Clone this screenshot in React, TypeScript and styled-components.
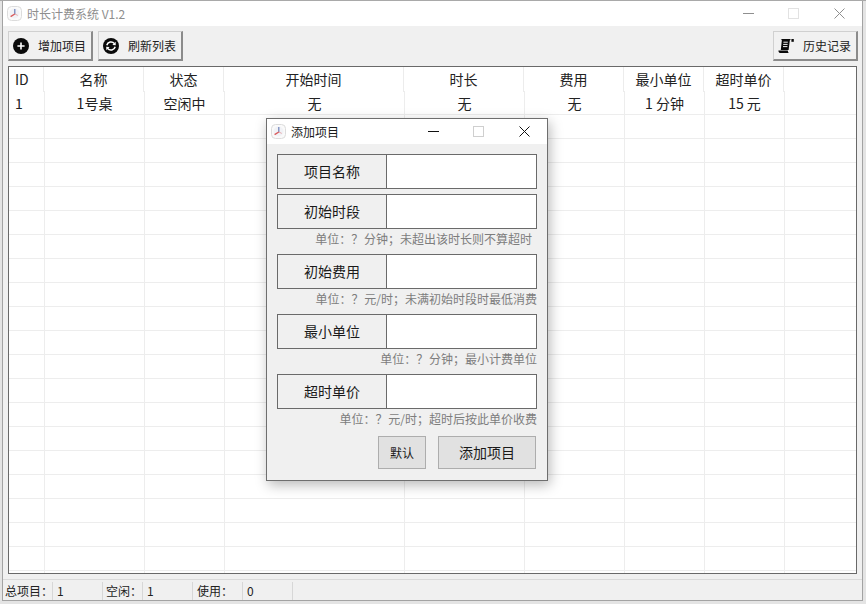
import React, {FC} from 'react';
import styled, {createGlobalStyle} from 'styled-components';

const GlobalStyle = createGlobalStyle`
  html, body {
    margin: 0;
    padding: 0;
    background: #fff;
    overflow: hidden;
  }

  body {
    font-family: "Noto Sans CJK SC", "Liberation Sans", sans-serif;
    color: #1a1a1a;
  }
`;

const Page = styled.div`
  width: 866px;
  height: 604px;
  background: #e4e4e4;
  border-top: 1px solid #a9a9a9;
  box-sizing: border-box;
  padding-left: 2px;
`;

const MainWindow = styled.div`
  position: relative;
  width: 861px;
  height: 600px;
  box-sizing: border-box;
  display: flex;
  flex-direction: column;
  background: #f0f0f0;
  border-left: 1px solid #a3a3a3;
  border-right: 1px solid #a3a3a3;
  border-bottom: 1px solid #a3a3a3;
`;

const TitleBar = styled.div<{$height: number}>`
  height: ${props => props.$height}px;
  flex: none;
  display: flex;
  align-items: center;
  background: #fff;
`;

const TitleIcon = styled.svg<{$left: number}>`
  width: 15px;
  height: 15px;
  flex: none;
  margin-left: ${props => props.$left}px;
`;

const TitleText = styled.span<{$inactive?: boolean; $gap: number}>`
  flex: 1;
  margin-left: ${props => props.$gap}px;
  font-size: 12px;
  line-height: 16px;
  color: ${props => (props.$inactive ? '#8e8e8e' : '#1a1a1a')};
`;

const Controls = styled.div`
  display: flex;
  align-self: stretch;
`;

const ControlButton = styled.div`
  width: 45.5px;
  display: flex;
  align-items: center;
  justify-content: center;
`;

const ControlIcon = styled.svg`
  width: 11px;
  height: 11px;
  fill: none;
  stroke-width: 1;
`;

const Toolbar = styled.div`
  height: 40px;
  flex: none;
  display: flex;
  align-items: center;
  box-sizing: border-box;
  padding: 0 4px 0 5px;
  gap: 5px;
`;

const ToolButton = styled.div<{$push?: boolean}>`
  width: 85px;
  height: 30px;
  box-sizing: border-box;
  display: flex;
  align-items: center;
  gap: 9px;
  padding-left: 4px;
  margin-left: ${props => (props.$push ? 'auto' : '0')};
  background: #f1f1f1;
  border-top: 1px solid #d0d0d0;
  border-left: 1px solid #d0d0d0;
  border-right: 2px solid #8b8b8b;
  border-bottom: 2px solid #8b8b8b;
  font-size: 12px;
  color: #222;
`;

const ToolIcon = styled.svg`
  width: 16px;
  height: 16px;
  flex: none;
`;

const Table = styled.div`
  flex: none;
  height: 508px;
  margin: 0 5px;
  box-sizing: border-box;
  background: #fff;
  border: 1px solid #696969;
  overflow: hidden;
`;

const HeaderRow = styled.div`
  display: grid;
  grid-template-columns: 35px 100px 80px 180px 120px 100px 80px 80px 1fr;
  height: 24px;
`;

const HeaderCell = styled.div<{$first?: boolean; $last?: boolean}>`
  box-sizing: border-box;
  padding-left: ${props => (props.$first ? '6px' : '0')};
  border-right: ${props => (props.$last ? 'none' : '1px solid #ececec')};
  text-align: ${props => (props.$first ? 'left' : 'center')};
  font-size: 14px;
  line-height: 25px;
  color: #222;
`;

const BodyRow = styled.div`
  display: grid;
  grid-template-columns: 36px 100px 80px 180px 120px 100px 80px 80px 1fr;
  height: 24px;
  box-sizing: border-box;
  border-bottom: 1px solid #ededed;
`;

const BodyCell = styled.div<{$first?: boolean; $last?: boolean}>`
  box-sizing: border-box;
  padding-left: ${props => (props.$first ? '6px' : '0')};
  border-right: ${props => (props.$last ? 'none' : '1px solid #ededed')};
  text-align: ${props => (props.$first ? 'left' : 'center')};
  font-size: 14px;
  line-height: 25px;
  color: #222;
`;

const StatusBar = styled.div`
  height: 21px;
  margin-top: 5px;
  flex: none;
  display: flex;
  border-top: 1px solid #dadada;
`;

const StatusCell = styled.div<{$width: number; $pad: number}>`
  width: ${props => props.$width}px;
  box-sizing: border-box;
  margin: 2px 0 1px;
  padding-left: ${props => props.$pad}px;
  border-right: 1px solid #d7d7d7;
  font-size: 12px;
  line-height: 18px;
  color: #222;
  white-space: nowrap;
`;

const Dialog = styled.div`
  position: absolute;
  left: 263px;
  top: 117px;
  width: 282px;
  height: 363px;
  box-sizing: border-box;
  background: #f0f0f0;
  border: 1px solid #6e6e6e;
  box-shadow: 2px 4px 12px rgba(0, 0, 0, 0.28);
`;

const Form = styled.div`
  display: flex;
  flex-direction: column;
  padding: 10px 10px 0;
`;

const Field = styled.div<{$spaced?: boolean}>`
  height: 35px;
  flex: none;
  box-sizing: border-box;
  display: flex;
  margin-bottom: ${props => (props.$spaced ? '5px' : '0')};
  border: 1px solid #6a6a6a;
`;

const FieldLabel = styled.label`
  width: 109px;
  flex: none;
  box-sizing: border-box;
  border-right: 1px solid #6a6a6a;
  text-align: center;
  font-size: 14px;
  line-height: 32px;
  color: #1a1a1a;
`;

const FieldInput = styled.input`
  flex: 1;
  min-width: 0;
  padding: 0 4px;
  border: none;
  outline: none;
  background: #fff;
`;

const Hint = styled.div<{$inset?: boolean}>`
  height: 25px;
  flex: none;
  padding-right: ${props => (props.$inset ? '5px' : '0')};
  text-align: right;
  font-size: 12px;
  line-height: 20px;
  word-spacing: -2px;
  color: #7d7d7d;
  white-space: pre;
`;

const Actions = styled.div`
  display: flex;
  justify-content: flex-end;
  gap: 12px;
  margin-top: 2px;
  padding-right: 1px;
`;

const ActionButton = styled.div<{$width: number; $size: number}>`
  width: ${props => props.$width}px;
  height: 33px;
  box-sizing: border-box;
  background: #e1e1e1;
  border: 1px solid #adadad;
  text-align: center;
  font-size: ${props => props.$size}px;
  line-height: 31px;
  color: #1a1a1a;
`;

const columns = ['ID', '名称', '状态', '开始时间', '时长', '费用', '最小单位', '超时单价', ''];
const firstRow = ['1', '1号桌', '空闲中', '无', '无', '无', '1 分钟', '15 元', ''];
const emptyRow = ['', '', '', '', '', '', '', '', ''];
const rows = [firstRow, ...Array.from({length: 20}, () => emptyRow)];

const statusCells = [
  {text: '总项目：', width: 50, pad: 2},
  {text: '1', width: 50, pad: 4},
  {text: '空闲：', width: 40, pad: 3},
  {text: '1', width: 50, pad: 4},
  {text: '使用：', width: 50, pad: 4},
  {text: '0', width: 50, pad: 4},
];

const AppIcon: FC<{left: number}> = ({left}) => (
  <TitleIcon $left={left} viewBox="0 0 15 15">
    <rect x="0.5" y="0.5" width="14" height="14" rx="4" fill="#fafafa" stroke="#dcdcdc" />
    <circle cx="7.5" cy="7.5" r="5" fill="#f1f2f6" />
    <path d="M7.8 3v5" stroke="#6c7fb8" strokeWidth="1.2" />
    <path d="M7.8 8L3.6 10.6" stroke="#d9585a" strokeWidth="1.3" />
    <path d="M7.8 8l3 1.4" stroke="#e3a3a5" strokeWidth="0.9" />
  </TitleIcon>
);

const WindowControls: FC<{dark?: boolean}> = ({dark}) => {
  const line = dark ? '#111' : '#8f8f8f';
  return (
    <Controls>
      <ControlButton>
        <ControlIcon viewBox="0 0 11 11" stroke={line}>
          <path d="M0 5.5h11" />
        </ControlIcon>
      </ControlButton>
      <ControlButton>
        <ControlIcon viewBox="0 0 11 11" stroke={dark ? '#cfcfcf' : '#e2e2e2'}>
          <rect x="0.5" y="0.5" width="10" height="10" />
        </ControlIcon>
      </ControlButton>
      <ControlButton>
        <ControlIcon viewBox="0 0 11 11" stroke={line}>
          <path d="M0.5 0.5l10 10M10.5 0.5l-10 10" />
        </ControlIcon>
      </ControlButton>
    </Controls>
  );
};

const fields = [
  {label: '项目名称'},
  {label: '初始时段', hint: '单位：？ 分钟；未超出该时长则不算超时', inset: true},
  {label: '初始费用', hint: '单位：？ 元/时；未满初始时段时最低消费'},
  {label: '最小单位', hint: '单位：？ 分钟；最小计费单位'},
  {label: '超时单价', hint: '单位：？ 元/时；超时后按此单价收费'},
];

export default function App() {
  return (
    <Page>
      <GlobalStyle />
      <MainWindow>
        <TitleBar $height={25}>
          <AppIcon left={4} />
          <TitleText $inactive $gap={5}>时长计费系统 V1.2</TitleText>
          <WindowControls />
        </TitleBar>
        <Toolbar>
          <ToolButton>
            <ToolIcon viewBox="0 0 16 16">
              <circle cx="8" cy="8" r="8" fill="#0a0a0a" />
              <path d="M8 4.4v7.2M4.4 8h7.2" stroke="#fff" strokeWidth="1.6" />
            </ToolIcon>
            增加项目
          </ToolButton>
          <ToolButton>
            <ToolIcon viewBox="0 0 16 16">
              <circle cx="8" cy="8" r="8" fill="#0a0a0a" />
              <path d="M3.8 7.2A4.3 4.3 0 0 1 11.4 5.6" fill="none" stroke="#fff" strokeWidth="1.5" />
              <path d="M9.4 7l3.4.3-.2-3.5z" fill="#fff" />
              <path d="M12.2 8.8A4.3 4.3 0 0 1 4.6 10.4" fill="none" stroke="#fff" strokeWidth="1.5" />
              <path d="M6.6 9l-3.4-.3.2 3.5z" fill="#fff" />
            </ToolIcon>
            刷新列表
          </ToolButton>
          <ToolButton $push>
            <ToolIcon viewBox="0 0 16 16">
              <path d="M2.6 1h10.2l-1 1.5-1.2 9.6H2.8l1-9.4C3.9 1.8 3.4 1.3 2.6 1z" fill="#0a0a0a" />
              <path d="M5.4 4.2h4.4M5.2 6.4h4.4M5 8.6h4.4" stroke="#f1f1f1" strokeWidth="1" />
              <path d="M0.4 12.6h9.4c0 .9.3 1.6.9 2.4H1.8C.9 14.8.4 13.8.4 12.6z" fill="#0a0a0a" />
              <rect x="13.4" y="1" width="2.4" height="2.8" fill="#0a0a0a" />
            </ToolIcon>
            历史记录
          </ToolButton>
        </Toolbar>
        <Table>
          <HeaderRow>
            {columns.map((name, index) => (
              <HeaderCell key={index} $first={index === 0} $last={index === columns.length - 1}>
                {name}
              </HeaderCell>
            ))}
          </HeaderRow>
          {rows.map((row, rowIndex) => (
            <BodyRow key={rowIndex}>
              {row.map((value, index) => (
                <BodyCell key={index} $first={index === 0} $last={index === row.length - 1}>
                  {value}
                </BodyCell>
              ))}
            </BodyRow>
          ))}
        </Table>
        <StatusBar>
          {statusCells.map((cell, index) => (
            <StatusCell key={index} $width={cell.width} $pad={cell.pad}>
              {cell.text}
            </StatusCell>
          ))}
        </StatusBar>
        <Dialog>
          <TitleBar $height={25}>
            <AppIcon left={4} />
            <TitleText $gap={5}>添加项目</TitleText>
            <WindowControls dark />
          </TitleBar>
          <Form>
            {fields.map(field => (
              <React.Fragment key={field.label}>
                <Field $spaced={!field.hint}>
                  <FieldLabel>{field.label}</FieldLabel>
                  <FieldInput />
                </Field>
                {field.hint && <Hint $inset={field.inset}>{field.hint}</Hint>}
              </React.Fragment>
            ))}
            <Actions>
              <ActionButton $width={48} $size={12}>默认</ActionButton>
              <ActionButton $width={98} $size={14}>添加项目</ActionButton>
            </Actions>
          </Form>
        </Dialog>
      </MainWindow>
    </Page>
  );
}
